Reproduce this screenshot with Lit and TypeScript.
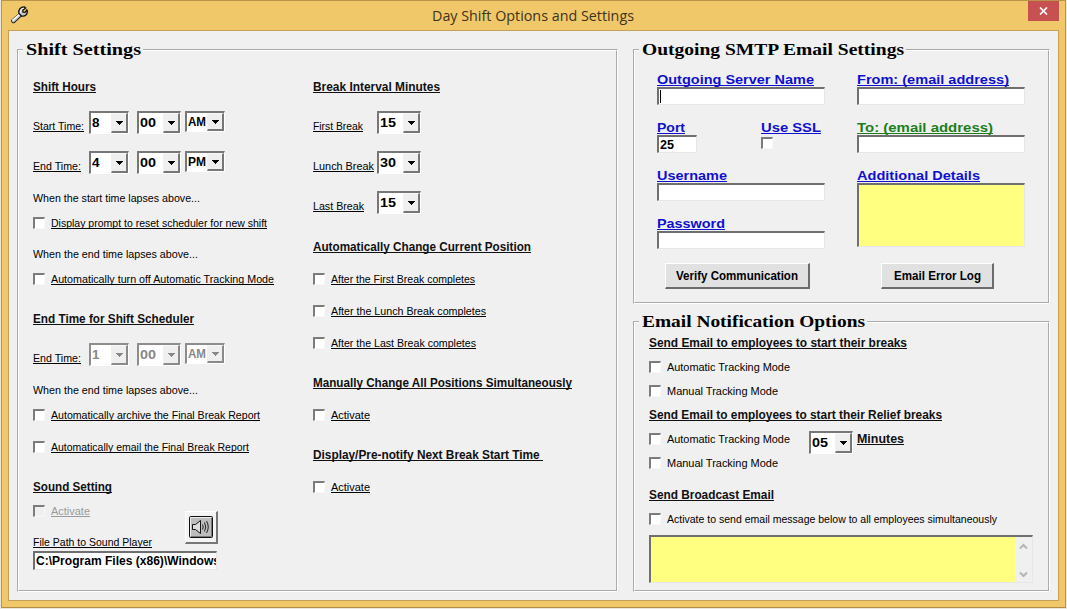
import { LitElement, html, css, svg, nothing } from "lit";
import { customElement, property } from "lit/decorators.js";
import { styleMap } from "lit/directives/style-map.js";
import { classMap } from "lit/directives/class-map.js";

/* A single line of text condensed or expanded to an exact width. */
@customElement("fit-text")
class FitText extends LitElement {
  @property({ type: Number }) w = 0;
  @property() text = "";
  @property({ type: Boolean }) underlined = false;

  static styles = css`
    :host { display: block; flex: none; white-space: pre; }
    .line { display: inline-block; transform-origin: 0 0; vertical-align: top; }
    .underlined { text-decoration: underline; text-decoration-thickness: 1px; text-underline-offset: 1px; text-decoration-skip-ink: none; }
  `;

  updated() {
    const line = this.renderRoot.querySelector(".line") as HTMLElement;
    line.style.transform = "none";
    const natural = line.getBoundingClientRect().width;
    if (natural > 0) line.style.transform = `scaleX(${this.w / natural})`;
  }

  render() {
    return html`<div style=${styleMap({ width: `${this.w}px` })}><span class=${classMap({ line: true, underlined: this.underlined })}>${this.text}</span></div>`;
  }
}

@customElement("drop-down")
class DropDown extends LitElement {
  @property() value = "";
  @property({ type: Number }) w = 44;
  @property({ type: Number }) tw = 19;
  @property({ type: Boolean }) small = false;
  @property({ type: Boolean }) disabled = false;

  static styles = css`
    :host { display: block; flex: none; }
    .box {
      box-sizing: border-box; height: 23px; display: flex; justify-content: space-between;
      background: #fff; border: 2px solid; border-color: #777 #fff #fff #777; border-right-width: 1px; border-bottom-width: 1px;
      font: bold 13.5px/20px "Liberation Sans", Arial, sans-serif; color: #000;
    }
    .box.small { height: 21px; font-size: 13px; line-height: 17px; }
    .value { padding-left: 1px; }
    .arrow {
      box-sizing: border-box; width: 17px; height: 100%; display: flex; align-items: center; justify-content: center;
      background: #efefef; border: 1px solid; border-color: #f8f8f8 #777 #777 #f0f0f0; border-right-width: 2px; border-bottom-width: 2px;
    }
    .disabled { color: #888; border-color: #8d8d8d #fff #fff #8d8d8d; }
    .disabled .arrow { border-right-color: #8a8a8a; border-bottom-color: #8a8a8a; }
  `;

  render() {
    return html`
      <div class=${classMap({ box: true, small: this.small, disabled: this.disabled })} style=${styleMap({ width: `${this.w}px` })}>
        <div class="value"><fit-text .w=${this.tw} .text=${this.value}></fit-text></div>
        <div class="arrow">
          <svg width="7" height="4" shape-rendering="crispEdges"><path d="M0 0H7V1H6V2H5V3H4V4H3V3H2V2H1V1H0Z" fill="currentColor" /></svg>
        </div>
      </div>`;
  }
}

const wrench = svg`
  <path d="M1.5 15.5 L9.4 8.4 L11.8 10.6 L4.6 17.4 Q2 18.8 1.5 15.5Z" fill="#c4c4c8" stroke="#222" stroke-width="1.1"/>
  <path d="M2.2 15.6 L10.3 8.6" stroke="#fff" stroke-width="1.4"/>
  <path d="M9 8.4 C8 4.6 10.6 1.8 14.4 2 L15.6 3 L12.8 5.2 L13 7.2 L15 7.4 L16.8 5 L17.4 6 C17.6 9.8 14.6 12 11.2 10.8Z" fill="#c8c8cc" stroke="#111" stroke-width="1.3"/>
  <path d="M10.4 7.6 C10 5 11.6 3.2 13.8 3.2" fill="none" stroke="#fff" stroke-width="1"/>`;

@customElement("app-root")
class AppRoot extends LitElement {
  static styles = css`
    :host { display: block; width: 1067px; height: 609px; overflow: hidden; }
    * { box-sizing: border-box; }
    .screen { width: 1067px; height: 609px; background: #ece7dc; padding: 0 1px 1px 1px; }
    .window { width: 1065px; height: 608px; background: #f0c869; border: 1px solid #b9954c; border-bottom-color: #b08d48; display: flex; flex-direction: column; }
    .titlebar { height: 29px; display: flex; justify-content: space-between; align-items: flex-start; }
    .side { width: 120px; display: flex; }
    .side.end { justify-content: flex-end; }
    .wrench { margin: 4px 0 0 8px; }
    .title { margin-left: -2px; padding-top: 4px; font: 14.5px/21px "Open Sans", "Noto Sans", sans-serif; color: #3d3420; }
    .close { width: 31px; height: 20px; margin-right: 6px; background: #c75050; display: flex; align-items: center; justify-content: center; }
    .client {
      flex: none; width: 1051px; height: 571px; margin-left: 6px; background: #f0f0f0; border: 1px solid #c4a05c;
      display: flex; gap: 15px; padding: 9px 0 0 8px; color: #000;
      font: 11px/16px "Liberation Sans", Arial, sans-serif;
    }
    fieldset { margin: 0; padding: 0; border: 2px groove #fff; min-width: 0; }
    legend { margin-left: 4px; padding: 1px 2px 1px 3px; font: bold 17px/18px "Liberation Serif", "Times New Roman", serif; }
    .shift { width: 601px; height: 552px; }
    .right { width: 417px; display: flex; flex-direction: column; gap: 8px; }
    .smtp { height: 264px; }
    .notify { height: 280px; }
    .cols { display: flex; padding: 19px 0 0 14px; }
    .col { width: 280px; display: flex; flex-direction: column; align-items: flex-start; }

    .h { font-size: 12px; font-weight: bold; color: #111; }
    .muted { color: #9a9a9a; }
    .g8 { margin-top: 8px; }
    .g9 { margin-top: 9px; }
    .g15 { margin-top: 15px; }
    .g16 { margin-top: 16px; }
    .g24 { margin-top: 24px; }

    .pick { height: 24px; display: flex; }
    .pick .name { width: 56px; padding-top: 7px; flex: none; }
    .pick.wide .name { width: 64px; }
    .minute { margin: 0 4px 0 8px; }

    .check { height: 16px; display: flex; gap: 6px; align-items: flex-start; }
    .tick { flex: none; width: 12px; height: 12px; margin-top: 2px; background: #fff; border: 2px solid; border-color: #7c7c7c #f8f8f8 #f8f8f8 #7c7c7c; border-right-width: 1px; border-bottom-width: 1px; }
    .tick.off { background: #f0f0f0; }

    .sound { height: 56px; width: 185px; display: flex; justify-content: space-between; }
    .player { width: 33px; height: 33px; margin-top: 16px; background: #f4f4f4; border: 1px solid; border-color: #fff #777 #777 #fff; border-right-width: 2px; border-bottom-width: 2px; display: flex; align-items: center; justify-content: center; }

    .input { height: 18px; background: #fff; border: 2px solid; border-color: #6f6f6f #e6e6e6 #e6e6e6 #6f6f6f; border-right-width: 1px; border-bottom-width: 1px; overflow: hidden; font-weight: bold; line-height: 15px; }
    .path { width: 184px; height: 19px; font-size: 12px; line-height: 17px; padding-left: 1px; }
    .w168 { width: 168px; }
    .w40 { width: 40px; font-size: 13px; padding-left: 1px; }
    .caret { width: 1px; height: 13px; margin: 1px 0 0 1px; background: #000; }
    .yellow { background: #ffff80; }
    .details { height: 64px; }

    .form { display: flex; padding: 12px 0 0 22px; gap: 32px; }
    .formcol { width: 168px; }
    .field { height: 48px; }
    .lbl { font-size: 13px; line-height: 15px; font-weight: bold; color: #1010d0; }
    .green { color: #1c7f1c; }
    .port { display: flex; gap: 64px; }
    .buttons { display: flex; margin-top: -1px; padding-left: 30px; gap: 71px; }
    .btn { height: 26px; background: #e1e1e1; border: 1px solid; border-color: #fff #6c6c6c #6c6c6c #fff; border-right-width: 2px; border-bottom-width: 2px; display: flex; align-items: center; justify-content: center; font-size: 12px; font-weight: bold; }
    .verify { width: 145px; }
    .log { width: 113px; }

    .list { padding: 3px 0 0 14px; }
    .relief { display: flex; margin-top: 8px; height: 40px; }
    .relief .modes { width: 160px; }
    .relief .after { margin-left: 4px; }
    .message { width: 384px; height: 48px; margin-top: 8px; display: flex; justify-content: flex-end; background: #ffff80; border: 2px solid; border-color: #6f6f6f #e6e6e6 #e6e6e6 #6f6f6f; border-right-width: 1px; border-bottom-width: 1px; }
    .scroll { width: 17px; background: #f0f0f0; display: flex; flex-direction: column; justify-content: space-between; align-items: center; padding: 6px 0 4px; }
  `;

  private heading(text: string, w: number, gap = "") {
    return html`<fit-text underlined class="h ${gap}" .w=${w} .text=${text}></fit-text>`;
  }

  private check(text: string, w: number, gap = "", underlined = true, off = false) {
    return html`<div class="check ${gap} ${off ? "muted" : ""}">
      <div class="tick ${off ? "off" : ""}"></div>
      <fit-text .underlined=${underlined} .w=${w} .text=${text}></fit-text>
    </div>`;
  }

  private time(label: string, w: number, hour: string, half: string, disabled = false) {
    return html`<div class="pick g16">
      <div class="name"><fit-text underlined .w=${w} .text=${label}></fit-text></div>
      <drop-down .w=${40} .tw=${7.5} .value=${hour} .disabled=${disabled}></drop-down>
      <drop-down class="minute" .w=${44} .tw=${16} .value=${"00"} .disabled=${disabled}></drop-down>
      <drop-down small .w=${40} .tw=${18} .value=${half} .disabled=${disabled}></drop-down>
    </div>`;
  }

  private interval(label: string, w: number, value: string) {
    return html`<div class="pick wide g16">
      <div class="name"><fit-text underlined .w=${w} .text=${label}></fit-text></div>
      <drop-down .w=${44} .tw=${16} .value=${value}></drop-down>
    </div>`;
  }

  private field(text: string, w: number, green = false, caret = false) {
    return html`<div class="field">
      <fit-text underlined class="lbl ${green ? "green" : ""}" .w=${w} .text=${text}></fit-text>
      <div class="input w168">${caret ? html`<div class="caret"></div>` : nothing}</div>
    </div>`;
  }

  private shiftGroup() {
    return html`<fieldset class="shift">
      <legend><fit-text .w=${115} .text=${"Shift Settings"}></fit-text></legend>
      <div class="cols">
        <div class="col">
          ${this.heading("Shift Hours", 63)}
          ${this.time("Start Time:", 51, "8", "AM")}
          ${this.time("End Time:", 48, "4", "PM")}
          <fit-text class="g15" .w=${167} .text=${"When the start time lapses above..."}></fit-text>
          ${this.check("Display prompt to reset scheduler for new shift", 216, "g9")}
          <fit-text class="g15" .w=${165} .text=${"When the end time lapses above..."}></fit-text>
          ${this.check("Automatically turn off Automatic Tracking Mode", 223, "g9")}
          ${this.heading("End Time for Shift Scheduler", 161, "g24")}
          ${this.time("End Time:", 48, "1", "AM", true)}
          <fit-text class="g15" .w=${165} .text=${"When the end time lapses above..."}></fit-text>
          ${this.check("Automatically archive the Final Break Report", 209, "g9")}
          ${this.check("Automatically email the Final Break Report", 198, "g16")}
          ${this.heading("Sound Setting", 79, "g24")}
          <div class="sound">
            <div>
              ${this.check("Activate", 39, "g8", true, true)}
              <fit-text underlined class="g15" .w=${119} .text=${"File Path to Sound Player"}></fit-text>
            </div>
            <div class="player">
              <svg width="24" height="22" viewBox="0 0 24 22">
                <rect x="0.5" y="0.5" width="23" height="21" rx="1" fill="#bdbdbd" stroke="#111" />
                <path d="M1.5 20V1.5H22" fill="none" stroke="#eee" />
                <path d="M2 20.5H22.5V2" fill="none" stroke="#777" />
                <path d="M3.5 8.5H6.5L11.5 4.5V17.5L6.5 13.5H3.5Z" fill="#ddd" stroke="#111" />
                <path d="M13.5 8.5Q15 11 13.5 13.5M15.5 6.5Q18 11 15.5 15.5M17.5 5Q21 11 17.5 17" fill="none" stroke="#111" stroke-width="0.9" />
              </svg>
            </div>
          </div>
          <div class="input path"><fit-text .w=${184} .text=${"C:\\Program Files (x86)\\Windows"}></fit-text></div>
        </div>
        <div class="col">
          ${this.heading("Break Interval Minutes", 127)}
          ${this.interval("First Break", 50, "15")}
          ${this.interval("Lunch Break", 61, "30")}
          ${this.interval("Last Break", 51, "15")}
          ${this.heading("Automatically Change Current Position", 218, "g24")}
          ${this.check("After the First Break completes", 144, "g16")}
          ${this.check("After the Lunch Break completes", 155, "g16")}
          ${this.check("After the Last Break completes", 145, "g16")}
          ${this.heading("Manually Change All Positions Simultaneously", 259, "g24")}
          ${this.check("Activate", 39, "g16")}
          ${this.heading("Display/Pre-notify Next Break Start Time ", 230, "g24")}
          ${this.check("Activate", 39, "g16")}
        </div>
      </div>
    </fieldset>`;
  }

  private smtpGroup() {
    return html`<fieldset class="smtp">
      <legend><fit-text .w=${262} .text=${"Outgoing SMTP Email Settings"}></fit-text></legend>
      <div class="form">
        <div class="formcol">
          ${this.field("Outgoing Server Name", 157, false, true)}
          <div class="field port">
            <div>
              <fit-text underlined class="lbl" .w=${28} .text=${"Port"}></fit-text>
              <div class="input w40"><fit-text .w=${14} .text=${"25"}></fit-text></div>
            </div>
            <div>
              <fit-text underlined class="lbl" .w=${60} .text=${"Use SSL"}></fit-text>
              <div class="tick"></div>
            </div>
          </div>
          ${this.field("Username", 70)}
          ${this.field("Password", 68)}
        </div>
        <div class="formcol">
          ${this.field("From: (email address)", 152)}
          ${this.field("To: (email address)", 136, true)}
          <fit-text underlined class="lbl" .w=${123} .text=${"Additional Details"}></fit-text>
          <div class="input yellow details"></div>
        </div>
      </div>
      <div class="buttons">
        <div class="btn verify"><fit-text .w=${122} .text=${"Verify Communication"}></fit-text></div>
        <div class="btn log"><fit-text .w=${87} .text=${"Email Error Log"}></fit-text></div>
      </div>
    </fieldset>`;
  }

  private notifyGroup() {
    return html`<fieldset class="notify">
      <legend><fit-text .w=${223} .text=${"Email Notification Options"}></fit-text></legend>
      <div class="list">
        ${this.heading("Send Email to employees to start their breaks", 258)}
        ${this.check("Automatic Tracking Mode", 123, "g8", false)}
        ${this.check("Manual Tracking Mode", 111, "g8", false)}
        ${this.heading("Send Email to employees to start their Relief breaks", 293, "g8")}
        <div class="relief">
          <div class="modes">
            ${this.check("Automatic Tracking Mode", 123, "", false)}
            ${this.check("Manual Tracking Mode", 111, "g8", false)}
          </div>
          <drop-down .w=${44} .tw=${16} .value=${"05"}></drop-down>
          <fit-text underlined class="h after" .w=${47} .text=${"Minutes"}></fit-text>
        </div>
        ${this.heading("Send Broadcast Email", 125, "g16")}
        ${this.check("Activate to send email message below to all employees simultaneously", 330, "g8", false)}
        <div class="message">
          <div class="scroll">
            <svg width="9" height="7"><path d="M1 5.5L4.5 2L8 5.5" fill="none" stroke="#b4b4b4" stroke-width="2" /></svg>
            <svg width="9" height="7"><path d="M1 1.5L4.5 5L8 1.5" fill="none" stroke="#b4b4b4" stroke-width="2" /></svg>
          </div>
        </div>
      </div>
    </fieldset>`;
  }

  render() {
    return html`<div class="screen"><div class="window">
      <div class="titlebar">
        <div class="side"><svg class="wrench" width="20" height="20">${wrench}</svg></div>
        <div class="title"><fit-text .w=${202} .text=${"Day Shift Options and Settings"}></fit-text></div>
        <div class="side end"><div class="close">
          <svg width="9" height="8"><path d="M1 0.5L8 7.5M8 0.5L1 7.5" stroke="#fff" stroke-width="1.7" /></svg>
        </div></div>
      </div>
      <div class="client">
        ${this.shiftGroup()}
        <div class="right">${this.smtpGroup()}${this.notifyGroup()}</div>
      </div>
    </div></div>`;
  }
}
